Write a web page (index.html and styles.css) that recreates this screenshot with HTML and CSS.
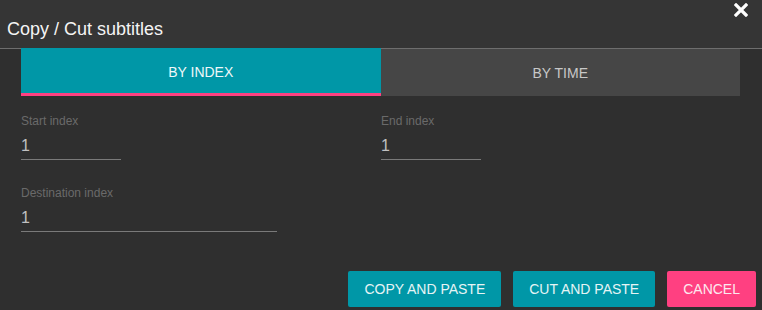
FILE: index.html
```html
<!DOCTYPE html>
<html lang="en">
<head>
    <meta charset="UTF-8">
    <title>Copy / Cut subtitles</title>
    <link rel="stylesheet" href="styles.css">
</head>
<body>
    <div class="dialog">
        <div class="dialog-header">
            <h2 class="dialog-title">Copy / Cut subtitles</h2>
            <button class="btn-x" title="Close">
                <svg viewBox="0 0 14 14" width="14" height="14"><path d="M2 2 L12 12 M12 2 L2 12" stroke="#fff" stroke-width="3.2" stroke-linecap="square"/></svg>
            </button>
        </div>
        <div class="tabs">
            <div class="tab active">BY INDEX</div>
            <div class="tab">BY TIME</div>
        </div>
        <div class="form">
            <div class="form-grid">
                <div class="field short"><label>Start index</label><div class="value">1</div></div>
                <div class="field short"><label>End index</label><div class="value">1</div></div>
            </div>
            <div class="field long"><label>Destination index</label><div class="value">1</div></div>
        </div>
        <div class="actions">
            <button class="btn btn-teal">COPY AND PASTE</button>
            <button class="btn btn-teal">CUT AND PASTE</button>
            <button class="btn btn-pink">CANCEL</button>
        </div>
    </div>
</body>
</html>
```

FILE: styles.css
```css
html, body { margin: 0; padding: 0; width: 762px; height: 310px; overflow: hidden; background: #2f2f2f; font-family: "Liberation Sans", Arial, sans-serif; }
.dialog { display: flex; flex-direction: column; height: 310px; }
.dialog-header { height: 49px; background: #353535; border-bottom: 1px solid #6e6e6e; display: flex; justify-content: space-between; align-items: flex-start; box-sizing: border-box; }
.dialog-title { margin: 0; padding: 19px 0 0 7px; font-size: 18px; font-weight: normal; color: #f4f4f4; line-height: 20px; }
.btn-x { background: none; border: none; padding: 0; margin: 3px 14px 0 0; width: 14px; height: 14px; cursor: pointer; display: block; }
.btn-x svg { display: block; }
.tabs { display: flex; margin: -1px 22px 0 21px; height: 48px; }
.tab { flex: 1; display: flex; justify-content: center; align-items: center; font-size: 14px; color: #c8c8c8; background: #464646; border-top: 1px solid #6e6e6e; box-sizing: border-box; }
.tab.active { background: #0097a7; color: #eef8f9; border-top: none; border-bottom: 3px solid #ff4081; padding-top: 3px; }
.form { padding: 18px 21px 0 21px; }
.form-grid { display: grid; grid-template-columns: 360px 1fr; }
.field label { display: block; font-size: 12px; color: #6a6a6a; line-height: 14px; }
.field .value { font-size: 16px; color: #c0c0c0; line-height: 18px; padding: 9px 0 4px 0; border-bottom: 1px solid #7a7a7a; }
.field.short .value { width: 100px; }
.field.long { margin-top: 26px; }
.field.long .value { width: 256px; }
.actions { margin-top: auto; display: flex; justify-content: flex-end; gap: 12px; padding: 0 6px 3px 0; }
.btn { height: 36px; border: none; border-radius: 2px; font-family: inherit; font-size: 14px; color: #e6f4f5; padding: 0 16px; cursor: pointer; }
.btn-teal { background: #0097a7; }
.btn-pink { background: #ff4081; color: #fde8ef; }
```
